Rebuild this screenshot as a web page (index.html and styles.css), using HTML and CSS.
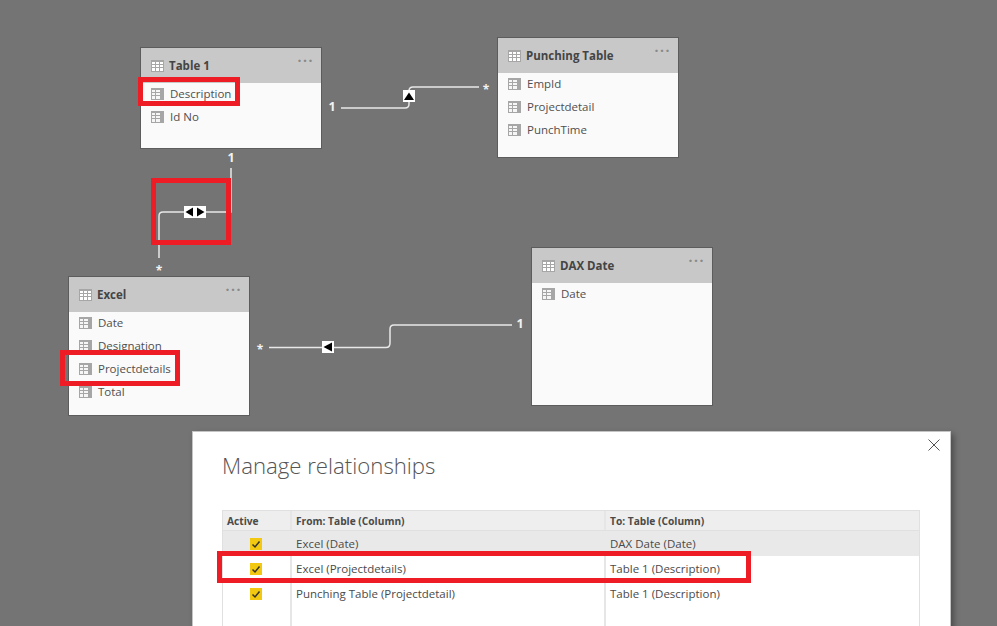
FILE: index.html
```html
<!DOCTYPE html>
<html>

<head>
    <meta charset="utf-8">
    <title>Manage relationships</title>
    <link rel="stylesheet" href="styles.css">
</head>

<body>
    <svg width="0" height="0" class="defs">
        <symbol id="table-icon" viewBox="0 0 13 12">
            <rect width="13" height="12" fill="#a6a6a6" />
            <path d="M1 2h3v2H1zM5 2h3v2H5zM9 2h3v2H9zM1 5h3v2H1zM5 5h3v2H5zM9 5h3v2H9zM1 8h3v3H1zM5 8h3v3H5zM9 8h3v3H9z" fill="#fff" />
        </symbol>
        <symbol id="field-icon" viewBox="0 0 13 12">
            <rect width="13" height="12" fill="#a6a6a6" />
            <path d="M1 2h3v2H1zM5 2h4v2H5zM1 5h3v2H1zM5 5h4v2H5zM1 8h3v3H1zM5 8h4v3H5z" fill="#f6f6f6" />
        </symbol>
    </svg>

    <div class="canvas">
        <!-- relationship lines -->
        <svg class="wires" width="997" height="626">
            <path d="M341 108H405Q409 108 409 104V91Q409 87 413 87H479" />
            <path d="M231 168V212H163Q159 212 159 216V258" />
            <path d="M269 347.500H386Q390 347.500 390 343V329Q390 325 394 325H512" />

            <rect class="marker" x="403" y="90" width="12" height="12" />
            <path class="arrow" d="M409 92.500L414 100H404Z" />
            <rect class="marker" x="184" y="206" width="22" height="12" />
            <path class="arrow" d="M185.500 212L193 207.500V216.500Z" />
            <path class="arrow" d="M204.500 212L197 207.500V216.500Z" />
            <rect class="marker" x="322" y="341" width="12" height="12" />
            <path class="arrow" d="M323.500 347L332 342.500V351.500Z" />
        </svg>

        <span class="card-end one end-a">1</span>
        <span class="card-end many end-b">*</span>
        <span class="card-end one end-c">1</span>
        <span class="card-end many end-d">*</span>
        <span class="card-end many end-e">*</span>
        <span class="card-end one end-f">1</span>

        <div class="node node-table1">
            <div class="node-head">
                <svg class="ico"><use href="#table-icon" /></svg>
                <span>Table 1</span>
                <i class="dots">···</i>
            </div>
            <ul class="fields">
                <li><svg class="ico"><use href="#field-icon" /></svg>Description</li>
                <li><svg class="ico"><use href="#field-icon" /></svg>Id No</li>
            </ul>
        </div>

        <div class="node node-punch">
            <div class="node-head">
                <svg class="ico"><use href="#table-icon" /></svg>
                <span>Punching Table</span>
                <i class="dots">···</i>
            </div>
            <ul class="fields">
                <li><svg class="ico"><use href="#field-icon" /></svg>EmpId</li>
                <li><svg class="ico"><use href="#field-icon" /></svg>Projectdetail</li>
                <li><svg class="ico"><use href="#field-icon" /></svg>PunchTime</li>
            </ul>
        </div>

        <div class="node node-excel">
            <div class="node-head">
                <svg class="ico"><use href="#table-icon" /></svg>
                <span>Excel</span>
                <i class="dots">···</i>
            </div>
            <ul class="fields">
                <li><svg class="ico"><use href="#field-icon" /></svg>Date</li>
                <li><svg class="ico"><use href="#field-icon" /></svg>Designation</li>
                <li><svg class="ico"><use href="#field-icon" /></svg>Projectdetails</li>
                <li><svg class="ico"><use href="#field-icon" /></svg>Total</li>
            </ul>
        </div>

        <div class="node node-dax">
            <div class="node-head">
                <svg class="ico"><use href="#table-icon" /></svg>
                <span>DAX Date</span>
                <i class="dots">···</i>
            </div>
            <ul class="fields">
                <li><svg class="ico"><use href="#field-icon" /></svg>Date</li>
            </ul>
        </div>

        <div class="dialog">
            <svg class="close" width="12" height="12" viewBox="0 0 12 12">
                <path d="M.5 .5L11.500 11.500M11.500 .5L.5 11.500" />
            </svg>
            <h1>Manage relationships</h1>
            <div class="rel-table">
                <div class="rel-row rel-head">
                    <div>Active</div>
                    <div>From: Table (Column)</div>
                    <div>To: Table (Column)</div>
                </div>
                <div class="rel-row selected">
                    <div class="check-cell"><span class="check"><svg width="12" height="12" viewBox="0 0 12 12"><path d="M2.500 6.500L5 9L9.500 3.500" /></svg></span></div>
                    <div>Excel (Date)</div>
                    <div>DAX Date (Date)</div>
                </div>
                <div class="rel-row">
                    <div class="check-cell"><span class="check"><svg width="12" height="12" viewBox="0 0 12 12"><path d="M2.500 6.500L5 9L9.500 3.500" /></svg></span></div>
                    <div>Excel (Projectdetails)</div>
                    <div>Table 1 (Description)</div>
                </div>
                <div class="rel-row">
                    <div class="check-cell"><span class="check"><svg width="12" height="12" viewBox="0 0 12 12"><path d="M2.500 6.500L5 9L9.500 3.500" /></svg></span></div>
                    <div>Punching Table (Projectdetail)</div>
                    <div>Table 1 (Description)</div>
                </div>
                <div class="rel-row rel-blank">
                    <div></div>
                    <div></div>
                    <div></div>
                </div>
            </div>
        </div>

        <!-- red annotation boxes -->
        <div class="mark mark-desc"></div>
        <div class="mark mark-link"></div>
        <div class="mark mark-proj"></div>
        <div class="mark mark-row"></div>
    </div>
</body>

</html>
```

FILE: styles.css
```css
html,
body {
    margin: 0;
    height: 100%;
    overflow: hidden;
}

body {
    background: #747474;
    font-family: "Open Sans", "Noto Sans", sans-serif;
    font-size: 11.5px;
    color: #4a4a4a;
}

.defs {
    position: absolute;
}

.canvas {
    position: relative;
    width: 997px;
    height: 626px;
    overflow: hidden;
}

.wires {
    position: absolute;
    left: 0;
    top: 0;
}

.wires path {
    fill: none;
    stroke: #e8e8e8;
    stroke-width: 1.5;
}

.wires .marker {
    fill: #fff;
}

.wires .arrow {
    fill: #000;
    stroke: none;
}

.card-end {
    position: absolute;
    color: #f2f2f2;
    font-weight: 700;
    line-height: 14px;
    width: 12px;
    text-align: center;
}

.one {
    font-size: 12.5px;
}

.many {
    font-size: 12px;
}

.end-a { left: 326px; top: 100px; }
.end-b { left: 480px; top: 83px; }
.end-c { left: 225px; top: 151px; }
.end-d { left: 153px; top: 264px; }
.end-e { left: 254px; top: 343px; }
.end-f { left: 514px; top: 317px; }

.node {
    position: absolute;
    width: 182px;
    box-sizing: border-box;
    background: #fafafa;
    border: 1px solid #5c5c5c;
    display: flex;
    flex-direction: column;
}

.node-table1 { left: 140px; top: 47px; height: 102px; }
.node-punch { left: 497px; top: 37px; height: 121px; }
.node-excel { left: 68px; top: 276px; height: 140px; }
.node-dax { left: 531px; top: 247px; height: 159px; }

.node-head {
    height: 35px;
    background: #c8c8c8;
    display: flex;
    align-items: center;
    padding: 0 0 0 10px;
    font-weight: 700;
    font-size: 11.500px;
    color: #444;
    position: relative;
}

.node-head .ico {
    margin-right: 5px;
}

.dots {
    position: absolute;
    right: 7px;
    top: 5px;
    font-style: normal;
    font-weight: 700;
    font-size: 14px;
    letter-spacing: 1.500px;
    line-height: 16px;
    color: #8a8a8a;
}

.ico {
    width: 13px;
    height: 12px;
    flex: none;
}

.fields {
    list-style: none;
    margin: -1px 0 0;
    padding: 0;
}

.fields li {
    height: 23px;
    display: flex;
    align-items: center;
    padding-left: 10px;
    color: #4f4f4f;
}

.fields .ico {
    margin-right: 6px;
}

.dialog {
    position: absolute;
    left: 192px;
    top: 431px;
    width: 759px;
    height: 300px;
    box-sizing: border-box;
    background: #fff;
    border: 1px solid #c4c4c4;
    box-shadow: 3px 3px 6px rgba(0, 0, 0, 0.35);
    padding: 0 30px 0 29px;
}

.dialog h1 {
    margin: 19px 0 29px;
    font-size: 22.200px;
    font-weight: 300;
    line-height: 30px;
    color: #555;
}

.close {
    position: absolute;
    right: 10px;
    top: 7px;
}

.close path {
    stroke: #555;
    stroke-width: 1;
    fill: none;
}

.rel-table {
    border: 1px solid #e0e0e0;
    border-bottom: none;
    font-size: 11.500px;
}

.rel-row {
    display: grid;
    grid-template-columns: 69px 314px 1fr;
    height: 25px;
    box-sizing: border-box;
}

.rel-row > div {
    display: flex;
    align-items: center;
    padding-left: 4px;
    border-right: 2px solid #e6e6e6;
}

.rel-row > div:last-child {
    border-right: none;
}

.rel-head {
    height: 20px;
    background: #eee;
    font-weight: 700;
    font-size: 10.200px;
    border-bottom: 1px solid #e0e0e0;
}

.selected {
    background: #e9e9e9;
}

.selected > div {
    border-right-color: transparent;
}

.rel-blank {
    height: 60px;
}

.rel-row > .check-cell {
    justify-content: center;
    padding: 0 2px 0 0;
}

.check {
    width: 12px;
    height: 12px;
    background: #f2c811;
    display: block;
}

.check svg {
    display: block;
}

.check path {
    fill: none;
    stroke: #333;
    stroke-width: 1.500;
}

.mark {
    position: absolute;
    box-sizing: border-box;
    border: 5px solid #ee1c25;
}

.mark-desc { left: 138px; top: 77px; width: 102px; height: 29px; }
.mark-link { left: 151px; top: 178px; width: 80px; height: 67px; }
.mark-proj { left: 60px; top: 350px; width: 120px; height: 36px; }
.mark-row { left: 217px; top: 551px; width: 534px; height: 32px; }
```
